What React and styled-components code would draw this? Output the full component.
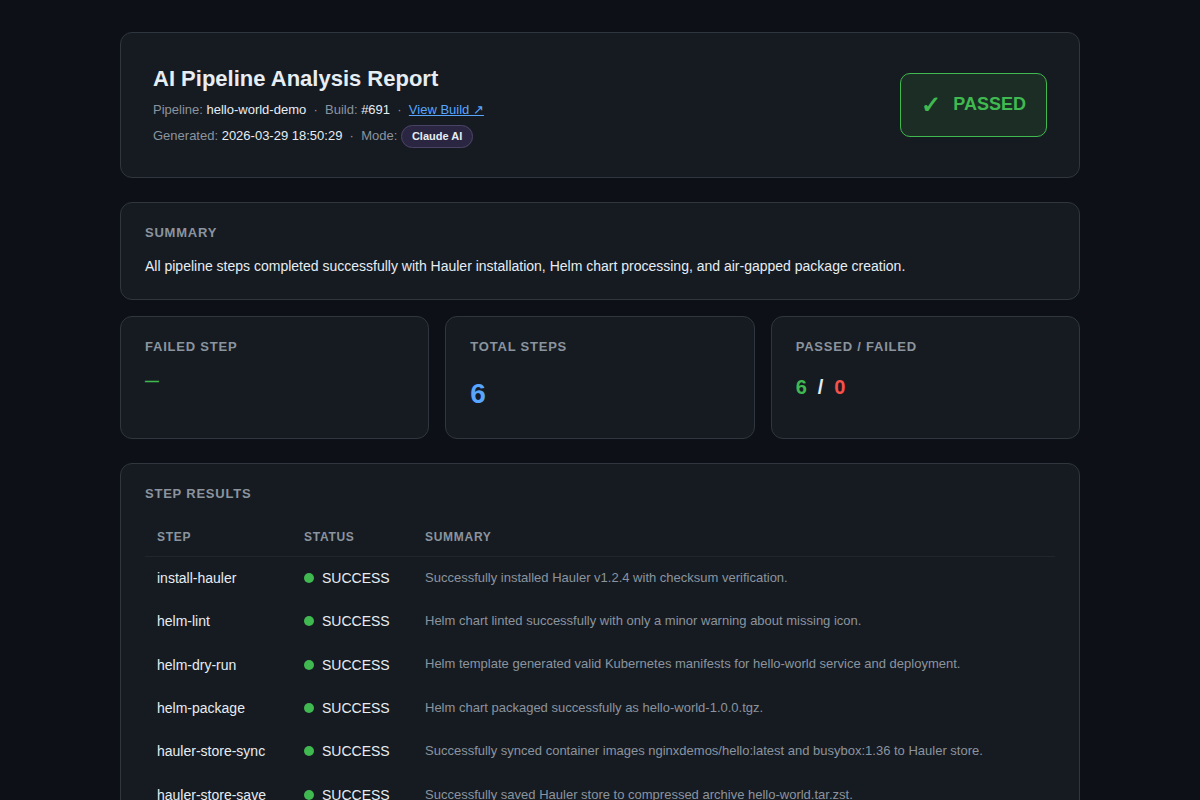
import React from "react";
import styled, { createGlobalStyle } from "styled-components";

const steps = [
  ["install-hauler", "Successfully installed Hauler v1.2.4 with checksum verification."],
  ["helm-lint", "Helm chart linted successfully with only a minor warning about missing icon."],
  ["helm-dry-run", "Helm template generated valid Kubernetes manifests for hello-world service and deployment."],
  ["helm-package", "Helm chart packaged successfully as hello-world-1.0.0.tgz."],
  ["hauler-store-sync", "Successfully synced container images nginxdemos/hello:latest and busybox:1.36 to Hauler store."],
  ["hauler-store-save", "Successfully saved Hauler store to compressed archive hello-world.tar.zst."],
];

const GlobalStyle = createGlobalStyle`
  * {
    box-sizing: border-box;
  }
  html, body {
    margin: 0;
    height: 800px;
    overflow: hidden;
    background: #0d1117;
  }
  body {
    font-family: "Liberation Sans", Arial, sans-serif;
    color: #e6edf3;
  }
`;

const Page = styled.div`
  width: 960px;
  margin: 0 auto;
  padding-top: 32px;
`;

const Card = styled.section`
  background: #161b22;
  border: 1px solid #30363d;
  border-radius: 12px;
  padding: 22px 24px;
`;

const Header = styled(Card)`
  display: flex;
  justify-content: space-between;
  align-items: center;
  padding: 32px;
  margin-bottom: 24px;
`;

const Title = styled.h1`
  margin: 0 0 6px;
  font-size: 22px;
  line-height: 28.6px;
  font-weight: 700;
  color: #e6edf3;
`;

const Meta = styled.div`
  font-size: 13px;
  line-height: 19px;
  color: #8b949e;
  & + & {
    margin-top: 7px;
  }
`;

const Strong = styled.span`
  color: #e6edf3;
`;

const BuildLink = styled.a`
  color: #58a6ff;
  text-decoration: underline;
`;

const ModeBadge = styled.span`
  padding: 4px 10px 5px;
  border: 1px solid #4a4365;
  border-radius: 12px;
  background: #2a2540;
  color: #e6edf3;
  font-size: 11px;
  line-height: 1;
  font-weight: 700;
`;

const Verdict = styled.div`
  display: flex;
  align-items: center;
  gap: 12px;
  height: 64px;
  padding: 0 20px;
  border: 1px solid #3fb950;
  border-radius: 10px;
  background: #1c2d26;
  color: #3fb950;
  font-size: 18px;
  font-weight: 700;
`;

const CheckMark = styled.span`
  font-size: 24px;
  line-height: 1;
`;

const Label = styled.h2`
  margin: 0;
  font-size: 13px;
  line-height: 15px;
  font-weight: 700;
  letter-spacing: 0.78px;
  color: #8b949e;
  text-transform: uppercase;
`;

const SummaryCard = styled(Card)`
  margin-bottom: 16px;
`;

const SummaryText = styled.p`
  margin: 15px 0 0;
  font-size: 14px;
  line-height: 22.4px;
  color: #e6edf3;
`;

const Stats = styled.div`
  display: grid;
  grid-template-columns: repeat(3, 1fr);
  gap: 16px;
  margin-bottom: 24px;
`;

const StatCard = styled(Card)`
  height: 123px;
`;

const Dash = styled.div`
  margin-top: 17px;
  font-size: 14px;
  line-height: 21px;
  font-weight: 700;
  color: #3fb950;
`;

const BigValue = styled.div`
  margin-top: 23px;
  font-size: 28px;
  line-height: 34px;
  font-weight: 700;
  color: #58a6ff;
`;

const Ratio = styled.div`
  display: flex;
  gap: 11px;
  margin-top: 16px;
  font-size: 20px;
  line-height: 34px;
  font-weight: 700;
`;

const RatioPart = styled.span`
  color: ${(p) => p.$color};
`;

const Table = styled.table`
  width: 100%;
  margin-top: 17px;
  border-collapse: collapse;
`;

const Th = styled.th`
  width: ${(p) => p.$width || "auto"};
  padding: 12px;
  border-bottom: 1px solid #21262d;
  font-size: 12px;
  line-height: 14px;
  font-weight: 700;
  letter-spacing: 0.72px;
  text-align: left;
  color: #8b949e;
`;

const Td = styled.td`
  padding: 12px;
  height: 43.4px;
  font-size: 14px;
  line-height: 19px;
  color: #e6edf3;
`;

const SummaryTd = styled(Td)`
  font-size: 13px;
  line-height: 17px;
  color: #8b949e;
  vertical-align: top;
`;

const Status = styled.span`
  display: flex;
  align-items: center;
  gap: 8px;
`;

const Dot = styled.span`
  width: 10px;
  height: 10px;
  margin-bottom: 1px;
  border-radius: 50%;
  background: #3fb950;
`;

export default function App() {
  return (
    <>
      <GlobalStyle />
      <Page>
        <Header>
          <div>
            <Title>AI Pipeline Analysis Report</Title>
            <Meta>
              Pipeline: <Strong>hello-world-demo</Strong> &nbsp;·&nbsp; Build: <Strong>#691</Strong> &nbsp;·&nbsp;{" "}
              <BuildLink href="#">View Build ↗</BuildLink>
            </Meta>
            <Meta>
              Generated: <Strong>2026-03-29 18:50:29</Strong> &nbsp;·&nbsp; Mode: <ModeBadge>Claude AI</ModeBadge>
            </Meta>
          </div>
          <Verdict>
            <CheckMark>✓</CheckMark>
            PASSED
          </Verdict>
        </Header>

        <SummaryCard>
          <Label>Summary</Label>
          <SummaryText>
            All pipeline steps completed successfully with Hauler installation, Helm chart processing, and air-gapped package creation.
          </SummaryText>
        </SummaryCard>

        <Stats>
          <StatCard>
            <Label>Failed Step</Label>
            <Dash>—</Dash>
          </StatCard>
          <StatCard>
            <Label>Total Steps</Label>
            <BigValue>6</BigValue>
          </StatCard>
          <StatCard>
            <Label>Passed / Failed</Label>
            <Ratio>
              <RatioPart $color="#3fb950">6</RatioPart>
              <RatioPart $color="#e6edf3">/</RatioPart>
              <RatioPart $color="#f85149">0</RatioPart>
            </Ratio>
          </StatCard>
        </Stats>

        <Card>
          <Label>Step Results</Label>
          <Table>
            <thead>
              <tr>
                <Th $width="147px">STEP</Th>
                <Th $width="121px">STATUS</Th>
                <Th>SUMMARY</Th>
              </tr>
            </thead>
            <tbody>
              {steps.map(([name, text]) => (
                <tr key={name}>
                  <Td>{name}</Td>
                  <Td>
                    <Status>
                      <Dot />
                      SUCCESS
                    </Status>
                  </Td>
                  <SummaryTd>{text}</SummaryTd>
                </tr>
              ))}
            </tbody>
          </Table>
        </Card>
      </Page>
    </>
  );
}
